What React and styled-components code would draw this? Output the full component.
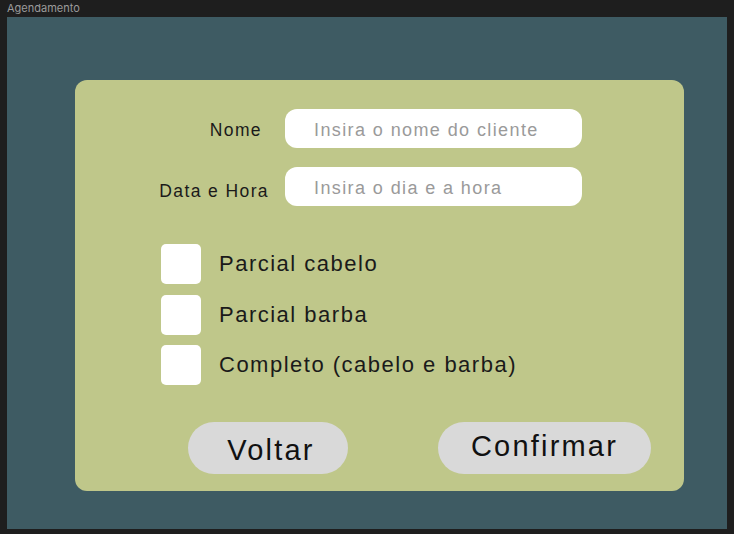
import React from 'react';
import styled, { createGlobalStyle } from 'styled-components';

const GlobalStyle = createGlobalStyle`
  html, body {
    margin: 0;
    padding: 0;
    background: #1e1e1e;
  }
  body {
    font-family: "Liberation Sans", Arial, sans-serif;
  }
`;

const Page = styled.div`
  width: 734px;
  height: 534px;
  background: #1e1e1e;
  padding-left: 7px;
  box-sizing: border-box;
`;

const FrameTitle = styled.div`
  height: 17px;
  line-height: 17px;
  font-size: 11px;
  color: #9b9b9b;
  font-family: Inter, "Liberation Sans", sans-serif;
`;

const Frame = styled.div`
  width: 720px;
  height: 512px;
  background: #3e5b63;
  padding: 63px 0 0 68px;
  box-sizing: border-box;
`;

const Card = styled.div`
  width: 609px;
  height: 411px;
  background: #bfc78a;
  border-radius: 12px;
  padding: 29px 0 0 84px;
  box-sizing: border-box;
  display: flex;
  flex-direction: column;
`;

const Fields = styled.div`
  display: grid;
  grid-template-columns: 110px 297px;
  column-gap: 16px;
  row-gap: 19px;
  align-items: center;
`;

const Label = styled.label`
  text-align: right;
  padding-right: ${p => p.$inset || 0}px;
  font-size: 17.5px;
  color: #1a1a1a;
  letter-spacing: 1.4px;
  white-space: nowrap;
  position: relative;
  top: ${p => p.$shift || 0}px;
`;

const Input = styled.input`
  height: 39px;
  border: none;
  border-radius: 12px;
  background: #ffffff;
  padding: 3px 0 0 29px;
  box-sizing: border-box;
  font-family: inherit;
  font-size: 18px;
  letter-spacing: 1.4px;
  outline: none;
  &::placeholder {
    color: #9a9a9a;
  }
`;

const Options = styled.div`
  display: flex;
  flex-direction: column;
  gap: 10.5px;
  margin-top: 38px;
  padding-left: 2px;
`;

const Option = styled.label`
  display: flex;
  align-items: center;
  gap: 18px;
  font-size: 22px;
  color: #1a1a1a;
  letter-spacing: 1.5px;
`;

const Box = styled.span`
  width: 40px;
  height: 40px;
  border-radius: 5px;
  background: #ffffff;
  flex-shrink: 0;
`;

const Actions = styled.div`
  display: flex;
  gap: 90px;
  margin-top: 37px;
  padding-left: 29px;
`;

const Button = styled.button`
  width: ${p => p.$w}px;
  height: 52px;
  border: none;
  border-radius: 26px;
  background: #d9d9d9;
  font-family: inherit;
  font-size: 29px;
  letter-spacing: 2.2px;
  color: #111;
  padding: ${p => p.$down ? '4px 0 0 6px' : '0 0 4px'};
  cursor: pointer;
`;

const options = ['Parcial cabelo', 'Parcial barba', 'Completo (cabelo e barba)'];

export default function App() {
  return (
    <Page>
      <GlobalStyle />
      <FrameTitle>Agendamento</FrameTitle>
      <Frame>
        <Card>
          <Fields>
            <Label $inset={7} $shift={2}>Nome</Label>
            <Input placeholder="Insira o nome do cliente" />
            <Label $shift={5}>Data e Hora</Label>
            <Input placeholder="Insira o dia e a hora" />
          </Fields>
          <Options>
            {options.map(o => (
              <Option key={o}>
                <Box />
                {o}
              </Option>
            ))}
          </Options>
          <Actions>
            <Button $w={160} $down>Voltar</Button>
            <Button $w={213}>Confirmar</Button>
          </Actions>
        </Card>
      </Frame>
    </Page>
  );
}
